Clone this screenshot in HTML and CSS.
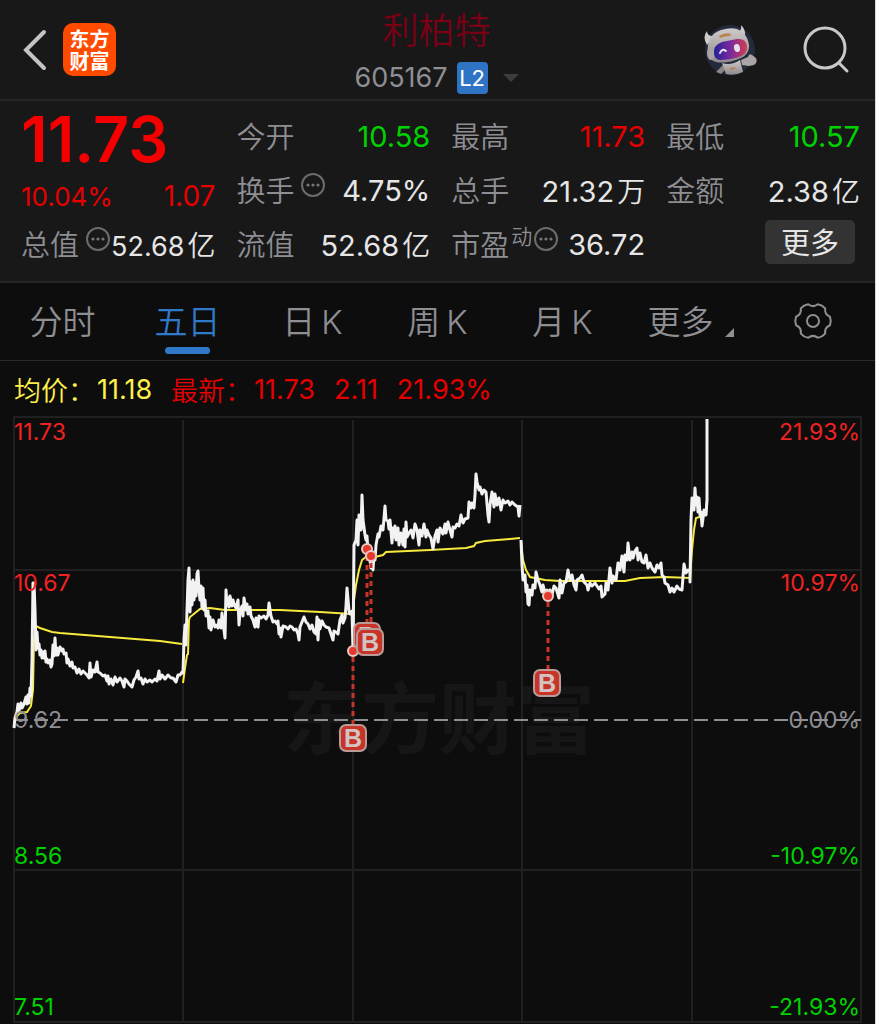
FILE: index.html
```html
<!DOCTYPE html>
<html lang="zh-CN">
<head>
  <meta charset="UTF-8">
  <title>利柏特 605167</title>
  <meta name="viewport" content="width=device-width, initial-scale=1.0">
  <link rel="stylesheet" href="styles.css">
</head>
<body>
  <header class="topbar">
    <div class="topbar-left">
      <button class="icon-btn" type="button" aria-label="返回">
        <svg width="26" height="42" viewBox="0 0 26 42"><path d="M22 3L4 21l18 18" fill="none" stroke="#c4c4c4" stroke-width="4" stroke-linecap="round"/></svg>
      </button>
      <a class="logo" href="#"><span>东方</span><span>财富</span></a>
    </div>
    <div class="stock">
      <h1>利柏特</h1>
      <div class="stock-code">
        <span>605167</span>
        <span class="level">L2</span>
        <svg width="16" height="8" viewBox="0 0 16 8"><path d="M0 0h16L8 8z" fill="#3c3c3c"/></svg>
      </div>
    </div>
    <div class="topbar-right">
      <button class="icon-btn" type="button" aria-label="智能助手">
        <svg width="54" height="54" viewBox="0 0 54 54">
          <defs>
            <linearGradient id="visor" x1="0" y1="0" x2="1" y2="0">
              <stop offset="0" stop-color="#24209a"/>
              <stop offset=".5" stop-color="#7a2a9c"/>
              <stop offset="1" stop-color="#d23c50"/>
            </linearGradient>
            <linearGradient id="shell" x1="0" y1="0" x2="0" y2="1">
              <stop offset="0" stop-color="#d0cbcb"/>
              <stop offset="1" stop-color="#8f898b"/>
            </linearGradient>
          </defs>
          <circle cx="27" cy="27" r="25" fill="#232a3b"/>
          <path d="M20 42l-7 7 5 2 6-6z" fill="#8b8586"/>
          <path d="M19 40q9 3 18-3l3 12q-8 4-17 2z" fill="url(#shell)"/>
          <path d="M38 37l7-3q1-4 4-2l4 3q2 5-2 7l-5 1-7-1z" fill="#aaa4a6"/>
          <path d="M4 22Q-1 14 4 8q0 6 8 5zM34 10q5-2 4-8 7 7 2 15z" fill="#d0cbcb"/>
          <path d="M5 30Q3 12 18 7q19-6 26 8 6 14-6 20-14 6-25 4-7-2-8-9z" fill="url(#shell)"/>
          <ellipse cx="8" cy="30" rx="4" ry="7" fill="#aaa4a6"/>
          <path d="M11 31q-1-9 8-12l15-3q9-1 10 7 1 8-8 11-9 3-18 3-6 0-7-6z" fill="url(#visor)"/>
          <path d="M16 13q6-4 12-2l-1 2q-5 0-10 2z" fill="#b98250"/>
          <path d="M17 30q2-5 6-2" fill="none" stroke="#e6dff0" stroke-width="2" stroke-linecap="round"/>
          <ellipse cx="34" cy="25" rx="3" ry="4" fill="#e6dff0" transform="rotate(-12 34 25)"/>
          <path d="M27 46l5-1" stroke="#b98250" stroke-width="2"/>
        </svg>
      </button>
      <button class="icon-btn" type="button" aria-label="搜索">
        <svg width="50" height="50" viewBox="0 0 50 50"><g fill="none" stroke="#c8c8c8" stroke-width="3" stroke-linecap="round"><circle cx="24" cy="23" r="20"/><path d="M38 38l8 8"/></g></svg>
      </button>
    </div>
  </header>

  <section class="quote">
    <div class="quote-col">
      <div class="row price">11.73</div>
      <div class="row change up"><span>10.04%</span><span class="diff">1.07</span></div>
      <div class="row"><span class="label">总值</span><svg class="info"><use href="#dots"/></svg><span class="value small">52.68<i>亿</i></span></div>
    </div>
    <div class="quote-col">
      <div class="row"><span class="label">今开</span><span class="value down">10.58</span></div>
      <div class="row"><span class="label">换手</span><svg class="info"><use href="#dots"/></svg><span class="value">4.75%</span></div>
      <div class="row"><span class="label">流值</span><span class="value">52.68<i>亿</i></span></div>
    </div>
    <div class="quote-col">
      <div class="row"><span class="label">最高</span><span class="value up">11.73</span></div>
      <div class="row"><span class="label">总手</span><span class="value">21.32<i>万</i></span></div>
      <div class="row"><span class="label">市盈<sup>动</sup></span><svg class="info tight"><use href="#dots"/></svg><span class="value">36.72</span></div>
    </div>
    <div class="quote-col">
      <div class="row"><span class="label">最低</span><span class="value down">10.57</span></div>
      <div class="row"><span class="label">金额</span><span class="value">2.38<i>亿</i></span></div>
      <div class="row"><button class="more" type="button">更多</button></div>
    </div>
  </section>

  <nav class="tabs">
    <button type="button">分时</button>
    <button type="button" class="active">五日</button>
    <button type="button">日<span>K</span></button>
    <button type="button">周<span>K</span></button>
    <button type="button">月<span>K</span></button>
    <button type="button" class="has-menu">更多</button>
    <button type="button" aria-label="设置">
      <svg width="40" height="40" viewBox="-20 -20 40 40">
        <g fill="none" stroke="#8e8e93" stroke-width="2" stroke-linejoin="round">
          <path d="M17-4.2Q18.5 0 17 4.2Q11.300 6.500 12.200 12.600Q9.300 16 4.800 16.800Q0 13-4.800 16.800Q-9.300 16-12.200 12.600Q-11.300 6.500-17 4.200Q-18.500 0-17-4.200Q-11.300-6.500-12.200-12.600Q-9.300-16-4.800-16.800Q0-13 4.800-16.800Q9.300-16 12.200-12.600Q11.300-6.500 17-4.200z"/>
          <circle r="6"/>
        </g>
      </svg>
    </button>
  </nav>

  <main>
    <div class="legend">
      <span class="avg">均价：</span><span class="avg num">11.18</span>
      <span class="last">最新：</span><span class="last num">11.73</span><span class="last num">2.11</span><span class="last num">21.93%</span>
    </div>

    <svg class="chart" viewBox="0 416 875 608" role="img" aria-label="五日走势">
      <defs>
        <symbol id="dots" viewBox="0 0 26 26">
          <circle cx="13" cy="13" r="11" fill="none" stroke="#6c6c6e" stroke-width="2"/>
          <g fill="#77777b"><circle cx="8" cy="13" r="1.600"/><circle cx="13" cy="13" r="1.600"/><circle cx="18" cy="13" r="1.600"/></g>
        </symbol>
        <symbol id="buy" viewBox="0 0 28 28">
          <rect x="1" y="1" width="26" height="26" rx="6" fill="#c93428" stroke="#b99c98" stroke-width="2"/>
          <text x="14" y="23" text-anchor="middle">B</text>
        </symbol>
      </defs>

      <text class="watermark" x="283" y="748">东方财富</text>

      <!-- grid -->
      <g class="grid">
        <path d="M14 417H861V1022H14z"/>
        <path d="M14 570H861M14 870H861"/>
        <path d="M183 420V1022M353 420V1022M522 420V1022M692 420V1022"/>
      </g>
      <path class="zero" d="M14 720H861"/>

      <!-- average price -->
      <g class="avg-line">
        <polyline points="14,722 17,716 20,713 27,712 31,706 33,690 34,640 36,626 40,628 52,632 60,633 110,637 160,641 182,644"/>
        <polyline points="183,683 185,668 187,655 188,654 189,620 190,617 195,613 200,609 210,608 225,610 280,610 320,612 352,614"/>
        <polyline points="353,650 354,600 356,585 359,570 362,560 367,556 375,557 383,555 386,552 430,550 466,548 474,546 476,543 485,541 510,539 520,538"/>
        <polyline points="521,540 523,560 526,570 530,577 545,580 560,581 625,581 640,578 665,577 690,578 692,550 694,530 696,518 703,516 706,515 707,499"/>
      </g>

      <!-- price -->
      <g class="price-line">
        <polyline points="14,728 15,718 17,712 18,704 19,711 21,703 22,708 24,704 26,697 27,704 28,695 29,703 30,688 31,696 32,660 33,583 34,583 35,610 36,650 37,632 38,648 39,644 40,655 41,650 42,658 43,652 44,658 45,651 46,662 47,659 48,663 50,660 51,667 52,664 53,645 54,656 55,638 56,655 57,648 58,655 60,647 62,651 63,649 64,654 66,653 67,663 68,659 70,666 72,662 73,668 75,667 77,673 79,669 81,674 83,671 85,673 87,675 89,678 90,663 91,677 93,670 95,672 97,662 98,672 100,673 103,676 105,675 107,681 108,676 109,684 111,679 113,685 115,677 117,682 120,678 122,681 124,687 125,679 127,681 129,684 132,687 134,680 136,677 138,671 139,679 141,678 143,684 145,679 147,682 150,680 152,682 155,679 157,681 159,671 160,679 162,675 165,679 168,675 171,678 173,678 176,682 178,675 180,675 182,672
          183,673 184,640 185,625 186,645 187,610 188,580 189,568 190,612 191,582 192,605 193,580 194,600 195,583 196,596 197,574 198,571 199,590 200,600 201,586 202,608 203,588 204,610 205,600 206,616 208,611 209,628 210,617 211,630 213,620 215,627 217,625 218,628 219,620 221,628 222,613 223,622 224,630 225,638 226,590 227,605 228,598 229,607 230,596 232,606 233,600 234,604 236,608 238,600 239,625 240,612 242,606 243,616 244,598 246,610 247,604 248,614 250,607 251,616 253,620 255,627 256,618 258,627 259,616 261,618 264,616 266,619 268,615 269,603 271,616 273,622 275,621 277,624 278,621 279,634 280,628 281,637 283,626 286,627 288,629 290,626 292,627 294,630 296,629 298,634 299,640 300,627 302,622 304,617 306,622 308,624 310,629 312,625 314,632 316,634 317,617 318,640 319,620 320,629 322,621 324,625 326,627 329,628 331,634 333,640 334,631 336,632 338,634 340,620 342,615 343,623 345,618 346,606 347,588 349,611 350,614 352,611
          353,651 354,545 356,540 357,520 358,545 359,515 361,530 362,495 363,520 365,535 366,540 367,536 368,552 370,560 371,568 372,566 373,570 374,555 375,560 376,545 378,534 379,537 381,526 383,530 385,506 386,520 388,521 389,529 390,520 392,543 393,528 394,537 395,526 396,540 398,528 399,545 401,533 403,545 404,529 405,547 406,522 407,537 409,533 411,530 413,538 415,524 417,530 419,545 420,530 422,536 424,524 426,537 427,530 429,535 431,538 433,549 435,536 437,530 438,542 440,528 443,534 445,524 446,533 448,522 450,530 452,537 453,527 455,528 457,524 459,526 461,515 463,523 465,519 468,518 469,502 471,508 472,503 474,508 475,495 476,474 477,482 479,490 480,487 482,494 484,490 486,492 488,515 489,522 490,505 492,492 494,507 495,494 497,505 499,498 501,510 503,500 505,503 508,501 510,505 512,502 515,505 518,507 519,516 520,505"/>
        <polyline points="521,540 522,565 523,580 525,575 526,592 527,585 528,604 529,605 530,590 532,595 533,585 535,588 536,572 538,580 540,585 542,592 543,585 545,593 547,590 548,597 550,590 552,595 554,586 556,588 559,598 560,580 562,593 564,583 566,582 568,570 570,580 572,575 574,585 576,590 577,580 580,578 582,575 584,582 587,585 588,590 590,583 592,586 595,583 597,586 599,589 601,586 602,597 605,594 606,583 608,590 610,568 612,583 613,576 616,580 618,563 620,570 622,556 624,572 625,555 627,560 628,543 630,560 632,552 633,558 635,551 637,548 638,560 640,553 642,562 644,563 646,555 648,568 650,563 652,568 655,572 657,565 659,568 661,563 662,575 664,577 665,583 668,585 670,592 672,588 674,592 677,586 679,589 682,590 684,564 686,573 688,570 690,572 690,582 691,520 692,498 694,510 695,488 696,505 697,497 698,512 699,498 700,515 701,512 702,526 704,510 706,515 707,500 707,419"/>
      </g>

      <!-- buy marks -->
      <g class="marks">
        <path d="M353 657V726M367 556V624M371 563V630M548 602V670"/>
        <circle cx="353" cy="651" r="5"/>
        <circle cx="367" cy="549" r="5"/>
        <circle cx="371" cy="556" r="5"/>
        <circle cx="548" cy="596" r="5"/>
        <use href="#buy" x="339" y="724" width="28" height="28"/>
        <use href="#buy" x="353" y="622" width="28" height="28"/>
        <use href="#buy" x="356" y="628" width="28" height="28"/>
        <use href="#buy" x="533" y="669" width="28" height="28"/>
      </g>

      <g class="axis">
        <text class="up" x="14" y="440">11.73</text>
        <text class="up" x="14" y="591">10.67</text>
        <text class="flat" x="14" y="728">9.62</text>
        <text class="down" x="14" y="864">8.56</text>
        <text class="down" x="14" y="1015">7.51</text>
      </g>
      <g class="axis right">
        <text class="up" x="860" y="440">21.93%</text>
        <text class="up" x="860" y="591">10.97%</text>
        <text class="flat" x="860" y="728">0.00%</text>
        <text class="down" x="860" y="864">-10.97%</text>
        <text class="down" x="860" y="1015">-21.93%</text>
      </g>
    </svg>
  </main>
</body>
</html>
```
FILE: styles.css
```css
* {
  box-sizing: border-box;
}
html {
  background: #0d0d0d;
}
body {
  margin: 0;
  border-right: 1px solid #d8d8d8;
  background: #0d0d0d;
  color: #e6e6e6;
  font-family: Inter, "Noto Sans CJK SC", sans-serif;
  font-weight: 350;
  overflow: hidden;
}
button {
  padding: 0;
  border: 0;
  background: none;
  color: inherit;
  font: inherit;
  cursor: pointer;
}
svg {
  display: block;
}
.up { color: #e60000; }
.down { color: #00d200; }

/* top bar */
.topbar {
  display: grid;
  grid-template-columns: 1fr auto 1fr;
  height: 101px;
  padding: 0 24px 0 22px;
  background: #181818;
  border-bottom: 2px solid #262626;
}
.topbar-left,
.topbar-right {
  display: flex;
  align-items: center;
}
.topbar-left {
  gap: 15px;
}
.topbar-right {
  justify-content: flex-end;
  gap: 44px;
}
.logo {
  width: 53px;
  height: 53px;
  padding-top: 6px;
  border-radius: 10px;
  background: #ff4a00;
  color: #fff;
  font-size: 20px;
  font-weight: 700;
  line-height: 22px;
  text-align: center;
  text-decoration: none;
}
.logo span {
  display: block;
}
.stock {
  text-align: center;
}
.stock h1 {
  margin: 9px 0 0;
  color: #7a0016;
  font-size: 36px;
  font-weight: 350;
  line-height: 44px;
}
.stock-code {
  display: flex;
  align-items: center;
  gap: 9px;
  margin-top: 9px;
  color: #8e8e93;
  font-size: 27px;
  font-weight: 400;
  line-height: 32px;
}
.stock-code svg {
  margin-left: 6px;
}
.level {
  width: 31px;
  height: 32px;
  border-radius: 4px;
  background: #2f74c4;
  color: #fff;
  font-size: 22px;
}

/* quote */
.quote {
  display: grid;
  grid-template-columns: repeat(4, 1fr);
  gap: 21px;
  padding: 8px 15px 10px 21px;
  background: #181818;
  border-bottom: 2px solid #262626;
}
.row {
  display: flex;
  align-items: center;
  height: 54px;
  font-size: 29px;
  font-weight: 400;
  white-space: nowrap;
}
.label {
  padding-bottom: 3px;
  color: #8e8e93;
  font-size: 29px;
  font-weight: 350;
}
.label sup {
  font-size: 21px;
  line-height: 0;
  vertical-align: 12px;
  margin-left: 2px;
}
.value {
  margin-left: auto;
}
.value.small {
  font-size: 27px;
}
.value i {
  margin-left: 3px;
  font-size: 28px;
  font-style: normal;
  font-weight: 350;
}
.info {
  width: 26px;
  height: 26px;
  margin: 0 0 10px 6px;
}
.info.tight {
  margin-left: 1px;
}
.price {
  padding-top: 6px;
  color: #f50000;
  font-size: 63px;
  font-weight: 600;
}
.change {
  justify-content: space-between;
  padding-top: 12px;
  font-size: 26px;
}
.diff {
  font-size: 28px;
}
.more {
  width: 90px;
  height: 44px;
  margin: 0 5px 4px auto;
  padding-bottom: 4px;
  border-radius: 5px;
  background: #333;
  font-size: 29px;
}

/* tabs */
.tabs {
  display: grid;
  grid-template-columns: repeat(7, 1fr);
  height: 78px;
  border-bottom: 1px solid #2a2a2a;
  color: #8e8e93;
  font-size: 33px;
}
.tabs button {
  position: relative;
  display: flex;
  align-items: center;
  justify-content: center;
  padding-bottom: 4px;
}
.tabs span {
  margin-left: 6px;
  padding-top: 4px;
}
.tabs svg {
  margin-top: 2px;
}
.tabs .active {
  color: #3079c9;
}
.tabs .active::after {
  content: "";
  position: absolute;
  bottom: 6px;
  width: 45px;
  height: 7px;
  border-radius: 4px;
  background: #3079c9;
}
.tabs .has-menu {
  padding-right: 14px;
}
.has-menu::after {
  content: "";
  position: absolute;
  right: 16px;
  bottom: 23px;
  border-left: 9px solid transparent;
  border-bottom: 9px solid #8e8e93;
}

/* chart */
.legend {
  display: flex;
  align-items: center;
  height: 55px;
  padding: 2px 0 0 14px;
  font-size: 27px;
}
.legend span {
  margin-right: 2px;
}
.legend .num {
  margin-right: 19px;
  font-weight: 400;
}
.avg { color: #fff04a; }
.last { color: #e60000; }
.chart {
  width: 100%;
}
.grid path {
  fill: none;
  stroke: #202020;
  stroke-width: 2;
}
.zero {
  stroke: #8e8e93;
  stroke-width: 2;
  stroke-dasharray: 14 6;
}
.watermark {
  fill: #161616;
  font-family: "Noto Sans CJK SC", sans-serif;
  font-size: 78px;
  font-weight: 700;
}
.avg-line {
  fill: none;
  stroke: #f7ea3e;
  stroke-width: 2;
}
.price-line {
  fill: none;
  stroke: #f2f2f2;
  stroke-width: 3;
  stroke-linejoin: round;
}
.marks path {
  stroke: #c93428;
  stroke-width: 3;
  stroke-dasharray: 5 4;
}
.marks circle {
  fill: #e5392c;
  stroke: #eec8c4;
  stroke-width: 2;
}
#buy text {
  fill: #d2c4c4;
  font-family: "Liberation Sans", sans-serif;
  font-size: 25px;
  font-weight: 700;
}
.axis {
  font-size: 23px;
  font-weight: 400;
}
.axis.right {
  text-anchor: end;
}
.axis .up { fill: #f02222; }
.axis .down { fill: #00d200; }
.axis .flat { fill: #8e8e93; }
```
